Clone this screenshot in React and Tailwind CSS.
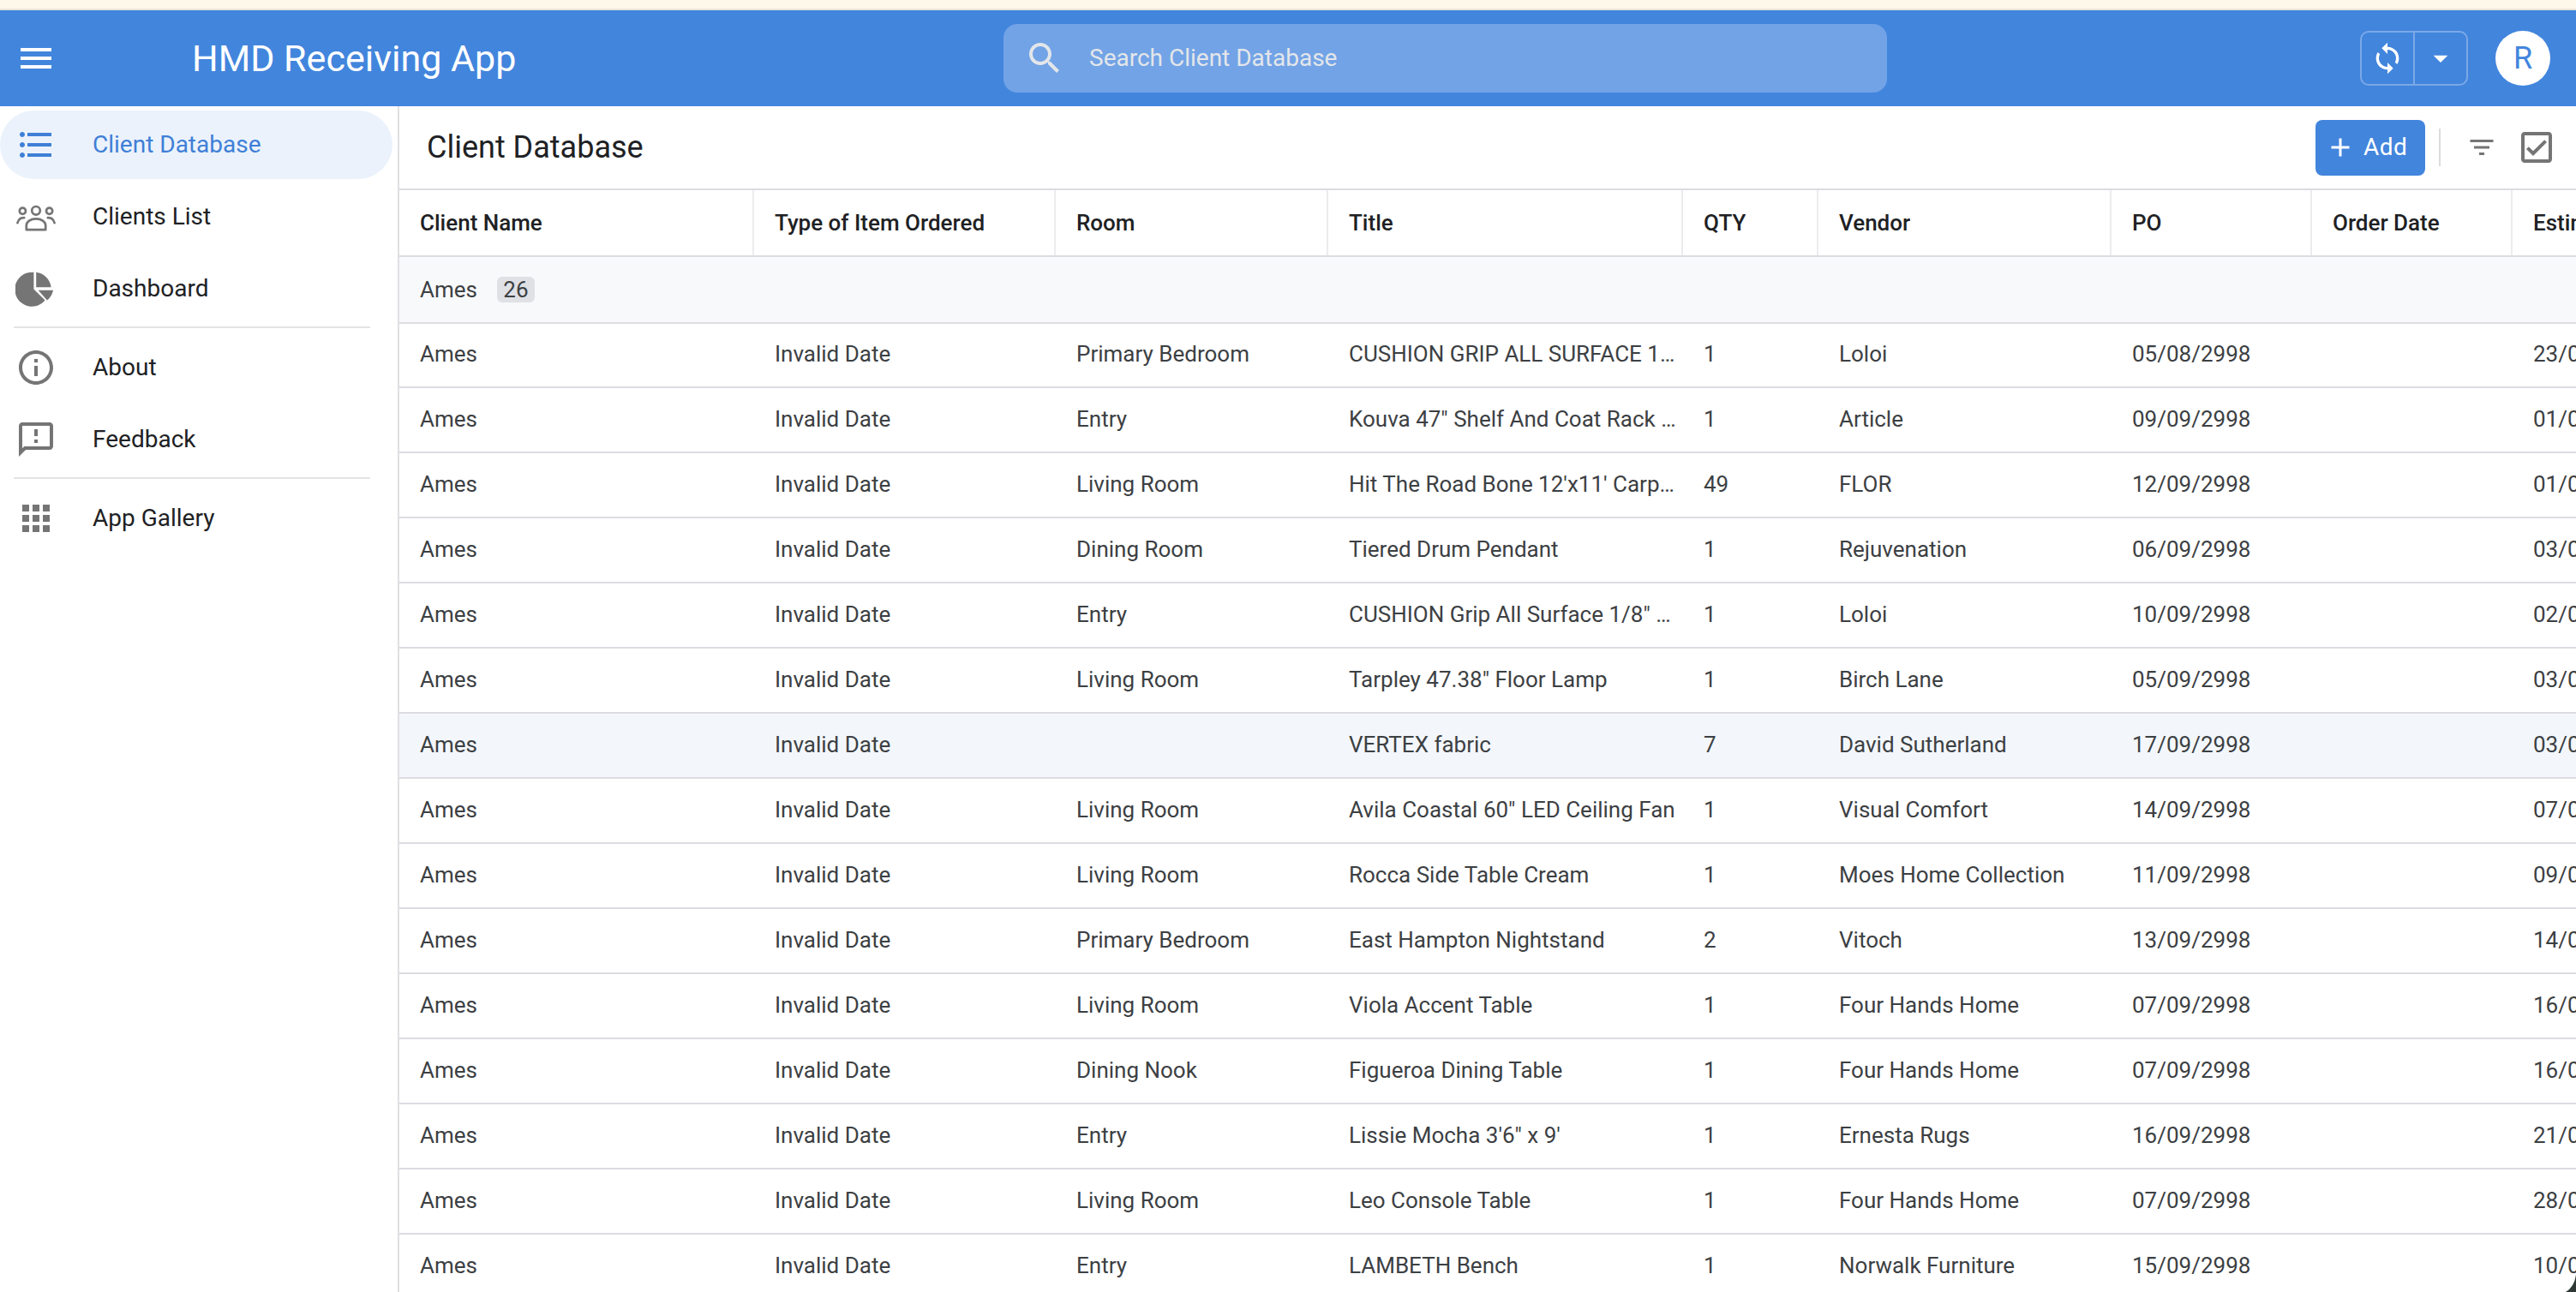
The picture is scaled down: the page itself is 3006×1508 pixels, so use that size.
import React from 'react';

const Icon = ({ d, size = 48, className = '' }) => (
  <svg width={size} height={size} viewBox="0 0 24 24" fill="currentColor" className={`shrink-0 ${className}`}>
    <path d={d} />
  </svg>
);

const paths = {
  menu: 'M3 18h18v-2H3v2zm0-5h18v-2H3v2zm0-7v2h18V6H3z',
  list: 'M4 10.5c-.83 0-1.5.67-1.5 1.5s.67 1.5 1.5 1.5 1.5-.67 1.5-1.5-.67-1.5-1.5-1.5zm0-6c-.83 0-1.5.67-1.5 1.5S3.17 7.5 4 7.5 5.5 6.83 5.5 6 4.83 4.5 4 4.5zm0 12c-.83 0-1.5.68-1.5 1.5s.68 1.5 1.5 1.5 1.5-.68 1.5-1.5-.67-1.5-1.5-1.5zM7 19h14v-2H7v2zm0-6h14v-2H7v2zm0-8v2h14V5H7z',
  pie: 'M10.7 2.4V12.3L17.3 18.8A10 10 0 1 1 10.7 2.4zM12.1 2.4V11.1H20.8A10 10 0 0 0 12.1 2.4zM13.3 12.9L18.5 18.8A10 10 0 0 0 22 12.9z',
  info: 'M11 7h2v2h-2zm0 4h2v6h-2zm1-9C6.48 2 2 6.48 2 12s4.48 10 10 10 10-4.48 10-10S17.52 2 12 2zm0 18c-4.41 0-8-3.59-8-8s3.59-8 8-8 8 3.59 8 8-3.59 8-8 8z',
  feedback: 'M20 2H4c-1.1 0-1.99.9-1.99 2L2 22l4-4h14c1.1 0 2-.9 2-2V4c0-1.1-.9-2-2-2zm0 14H5.17L4 17.17V4h16v12zM11 12h2v2h-2zm0-6h2v4h-2z',
  apps: 'M4 8h4V4H4v4zm6 12h4v-4h-4v4zm-6 0h4v-4H4v4zm0-6h4v-4H4v4zm6 0h4v-4h-4v4zm6-10v4h4V4h-4zm-6 4h4V4h-4v4zm6 6h4v-4h-4v4zm0 6h4v-4h-4v4z',
  search: 'M15.5 14h-.79l-.28-.27C15.41 12.59 16 11.11 16 9.5 16 5.91 13.09 3 9.5 3S3 5.91 3 9.5 5.91 16 9.5 16c1.61 0 3.09-.59 4.23-1.57l.27.28v.79l5 4.99L20.49 19l-4.99-5zm-6 0C7.01 14 5 11.99 5 9.5S7.01 5 9.5 5 14 7.01 14 9.5 11.99 14 9.5 14z',
  sync: 'M12 4V1L8 5l4 4V6c3.31 0 6 2.69 6 6 0 1.01-.25 1.97-.7 2.8l1.46 1.46C19.54 15.03 20 13.57 20 12c0-4.42-3.58-8-8-8zm0 14c-3.31 0-6-2.69-6-6 0-1.01.25-1.97.7-2.8L5.24 7.74C4.46 8.97 4 10.43 4 12c0 4.42 3.58 8 8 8v3l4-4-4-4v3z',
  drop: 'M7 10l5 5 5-5z',
  add: 'M19 13h-6v6h-2v-6H5v-2h6V5h2v6h6v2z',
  filter: 'M10 18h4v-2h-4v2zM3 6v2h18V6H3zm3 7h12v-2H6v2z',
  check: 'M19 3H5c-1.11 0-2 .9-2 2v14c0 1.1.89 2 2 2h14c1.11 0 2-.9 2-2V5c0-1.1-.89-2-2-2zm0 16H5V5h14v14zM17.99 9l-1.41-1.42-6.59 6.59-2.58-2.57-1.42 1.41 4 3.99z',
};

// outlined "groups" icon, the package ones are filled
const GroupsIcon = () => (
  <svg width="48" height="48" viewBox="0 0 24 24" fill="none" stroke="currentColor" strokeWidth="1.35" strokeLinecap="round" strokeLinejoin="round" className="shrink-0">
    <circle cx="12" cy="8.4" r="2.4" />
    <circle cx="4.2" cy="8.6" r="1.8" />
    <circle cx="19.8" cy="8.6" r="1.8" />
    <path d="M6.4 19.6V17c0-2.2 2.5-3.8 5.6-3.8s5.6 1.6 5.6 3.8v2.6z" />
    <path d="M1.2 15.6c.4-1.8 1.9-3 3.9-3" />
    <path d="M22.8 15.6c-.4-1.8-1.9-3-3.9-3" />
  </svg>
);

const NavItem = ({ icon, label, active }) => (
  <div className={`flex h-20 w-[458px] items-center rounded-full pl-[18px] mb-1 ${active ? 'bg-[#ebf2fc] text-[#3f7fd6]' : 'text-[#202124]'}`}>
    <span className={active ? 'text-[#3f7fd6]' : 'text-[#757575]'}>{icon}</span>
    <span className="ml-[42px] text-[28px]">{label}</span>
  </div>
);

const Divider = () => <div className="mx-4 mt-[2px] mb-[6px] h-[2px] w-[416px] bg-[#e3e3e6]" />;

const columns = ['Client Name', 'Type of Item Ordered', 'Room', 'Title', 'QTY', 'Vendor', 'PO', 'Order Date', 'Estimated Delivery'];
const gridCols = 'grid grid-cols-[414px_352px_318px_414px_158px_342px_234px_234px_300px]';

const rows = [
  ['Primary Bedroom', 'CUSHION GRIP ALL SURFACE 1/8" Rug Pad', '1', 'Loloi', '05/08/2998', '23/09/2998'],
  ['Entry', 'Kouva 47" Shelf And Coat Rack Natural', '1', 'Article', '09/09/2998', '01/09/2998'],
  ['Living Room', "Hit The Road Bone 12'x11' Carpet Tile", '49', 'FLOR', '12/09/2998', '01/09/2998'],
  ['Dining Room', 'Tiered Drum Pendant', '1', 'Rejuvenation', '06/09/2998', '03/09/2998'],
  ['Entry', 'CUSHION Grip All Surface 1/8" Rug Pad', '1', 'Loloi', '10/09/2998', '02/09/2998'],
  ['Living Room', 'Tarpley 47.38" Floor Lamp', '1', 'Birch Lane', '05/09/2998', '03/09/2998'],
  ['', 'VERTEX fabric', '7', 'David Sutherland', '17/09/2998', '03/09/2998'],
  ['Living Room', 'Avila Coastal 60" LED Ceiling Fan', '1', 'Visual Comfort', '14/09/2998', '07/09/2998'],
  ['Living Room', 'Rocca Side Table Cream', '1', 'Moes Home Collection', '11/09/2998', '09/09/2998'],
  ['Primary Bedroom', 'East Hampton Nightstand', '2', 'Vitoch', '13/09/2998', '14/09/2998'],
  ['Living Room', 'Viola Accent Table', '1', 'Four Hands Home', '07/09/2998', '16/09/2998'],
  ['Dining Nook', 'Figueroa Dining Table', '1', 'Four Hands Home', '07/09/2998', '16/09/2998'],
  ['Entry', `Lissie Mocha 3'6" x 9'`, '1', 'Ernesta Rugs', '16/09/2998', '21/09/2998'],
  ['Living Room', 'Leo Console Table', '1', 'Four Hands Home', '07/09/2998', '28/09/2998'],
  ['Entry', 'LAMBETH Bench', '1', 'Norwalk Furniture', '15/09/2998', '10/09/2998'],
];

const Cell = ({ children }) => (
  <div className="flex min-w-0 items-center pb-[2px] pl-6 pr-2">
    <span className="truncate">{children}</span>
  </div>
);

export default function App() {
  return (
    <div className="relative flex h-screen w-full flex-col overflow-hidden bg-white font-['Roboto',sans-serif]">
      <div className="h-3 shrink-0 border-b-2 border-[#e8e4d8] bg-[#fdf8ea]" />

      <header className="relative flex h-28 shrink-0 items-center bg-[#4285dd] text-white">
        <div className="ml-[18px]"><Icon d={paths.menu} /></div>
        <h1 className="ml-[158px] w-[380px] whitespace-nowrap text-[43px] font-normal leading-none">HMD Receiving App</h1>
        <div className="ml-[567px] flex h-20 w-[1031px] items-center rounded-2xl bg-[#72a3e6] pl-6">
          <Icon d={paths.search} className="text-[#e3e6ea]" />
          <span className="ml-[28px] text-[28px] text-[#e3e6ea]">Search Client Database</span>
        </div>
        <div className="ml-auto flex items-center pr-[30px]">
          <div className="flex h-16 w-[126px] rounded-[10px] border-2 border-white/30">
            <div className="flex w-[62px] items-center justify-center border-r-2 border-white/30"><Icon d={paths.sync} size={40} /></div>
            <div className="flex flex-1 items-center justify-center"><Icon d={paths.drop} size={40} /></div>
          </div>
          <div className="ml-8 flex h-16 w-16 items-center justify-center rounded-full bg-white text-[36px] text-[#4285dd]">R</div>
        </div>
      </header>

      <div className="flex min-h-0 flex-1">
        <aside className="w-[466px] shrink-0 border-r-2 border-[#dfdfe3] pt-[5px]">
          <NavItem active icon={<Icon d={paths.list} />} label="Client Database" />
          <NavItem icon={<GroupsIcon />} label="Clients List" />
          <NavItem icon={<Icon d={paths.pie} />} label="Dashboard" />
          <Divider />
          <NavItem icon={<Icon d={paths.info} />} label="About" />
          <NavItem icon={<Icon d={paths.feedback} />} label="Feedback" />
          <Divider />
          <NavItem icon={<Icon d={paths.apps} />} label="App Gallery" />
        </aside>

        <main className="min-w-0 flex-1 overflow-hidden">
          <div className="flex h-[98px] items-center border-b-2 border-[#dcdce2] pl-8">
            <h2 className="text-[36px] text-[#202124]">Client Database</h2>
            <div className="ml-auto flex items-center text-[#757575]">
              <button className="flex h-[65px] w-32 items-center rounded-lg bg-[#4285dd] pl-[11px] text-[28px] tracking-[0.5px] text-white">
                <Icon d={paths.add} size={36} />
                <span className="ml-[9px]">Add</span>
              </button>
              <div className="ml-4 h-11 w-[2px] bg-[#dcdcdc]" />
              <div className="ml-[30px]"><Icon d={paths.filter} size={36} /></div>
              <div className="ml-[22px] mr-[22px]"><Icon d={paths.check} /></div>
            </div>
          </div>

          <div className="w-[2600px] text-[26px] text-[#3c4043]">
            <div className={`${gridCols} h-[78px] border-b-2 border-[#dcdce2] font-medium text-[#202124]`}>
              {columns.map((name) => (
                <div key={name} className="flex items-center border-r-2 border-[#ececef] pl-6 last:border-r-0">
                  <span className="truncate">{name}</span>
                </div>
              ))}
            </div>

            <div className="flex h-[78px] items-center border-b-2 border-[#dcdce2] bg-[#f8f9fa] pl-6">
              <span>Ames</span>
              <span className="ml-[23px] flex h-[30px] w-11 items-center justify-center rounded-md bg-[#dfe1e5] text-[26px]">26</span>
            </div>

            {rows.map((row, i) => (
              <div
                key={i}
                className={`${gridCols} border-b-2 border-[#dcdce2] ${i === 0 ? 'h-[75px]' : 'h-[76px]'} ${i === 6 ? 'bg-[#f3f7fb]' : ''}`}
              >
                <Cell>Ames</Cell>
                <Cell>Invalid Date</Cell>
                <Cell>{row[0]}</Cell>
                <Cell>{row[1]}</Cell>
                <Cell>{row[2]}</Cell>
                <Cell>{row[3]}</Cell>
                <Cell>{row[4]}</Cell>
                <Cell />
                <Cell>{row[5]}</Cell>
              </div>
            ))}
          </div>
        </main>
      </div>

      {/* window corner showing at the bottom right of the capture */}
      <svg width="12" height="20" viewBox="0 0 12 20" className="absolute bottom-0 right-0">
        <path d="M12 0Q10 14 0 20H12z" fill="#2f3a36" />
      </svg>
    </div>
  );
}
